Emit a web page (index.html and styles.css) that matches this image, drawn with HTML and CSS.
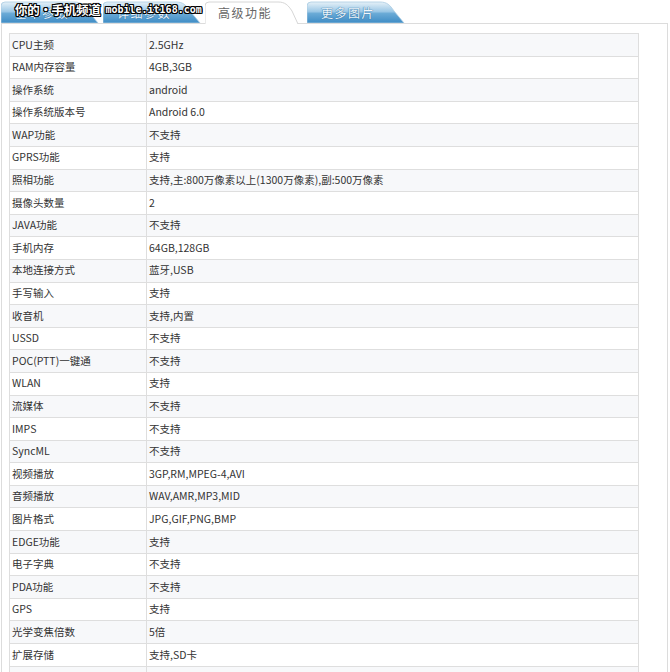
FILE: index.html
```html
<!DOCTYPE html>
<html lang="zh-CN">
<head>
<meta charset="utf-8">
<title>高级功能</title>
<link rel="stylesheet" href="styles.css">
</head>
<body>
<div class="page">
  <div class="tabs">
    <div class="tab tab-blue">
      <svg class="tab-bg" viewBox="0 0 98 22" preserveAspectRatio="none"><defs><linearGradient id="gb" x1="0" y1="0" x2="0" y2="1"><stop offset="0" stop-color="#e6f1f8"/><stop offset="0.45" stop-color="#9cc8e6"/><stop offset="0.55" stop-color="#6aaad6"/><stop offset="1" stop-color="#3e8cc5"/></linearGradient></defs><path d="M0,22 V5 Q0,1 4,1 H73 C80,1 83,4 87,10 L97,22 Z" fill="url(#gb)" stroke="#a9cbe2" stroke-width="0.8"/></svg>
      <span class="tab-text">基本参数</span>
    </div>
    <div class="tab tab-blue">
      <svg class="tab-bg" viewBox="0 0 98 22" preserveAspectRatio="none"><path d="M0,22 V5 Q0,1 4,1 H73 C80,1 83,4 87,10 L97,22 Z" fill="url(#gb)" stroke="#a9cbe2" stroke-width="0.8"/></svg>
      <span class="tab-text">详细参数</span>
    </div>
    <div class="tab tab-active">
      <svg class="tab-bg" viewBox="0 0 98 23" preserveAspectRatio="none"><path d="M0,23 V5 Q0,1 4,1 H73 C80,1 83,4 87,10 L93,23" fill="#fff" stroke="#d6d6d6" stroke-width="1"/></svg>
      <span class="tab-text">高级功能</span>
    </div>
    <div class="tab tab-blue">
      <svg class="tab-bg" viewBox="0 0 98 22" preserveAspectRatio="none"><path d="M0,22 V5 Q0,1 4,1 H73 C80,1 83,4 87,10 L97,22 Z" fill="url(#gb)" stroke="#a9cbe2" stroke-width="0.8"/></svg>
      <span class="tab-text">更多图片</span>
    </div>
    <div class="watermark"><span class="wm-cn">你的•手机频道</span><span class="wm-en">mobile.it168.com</span></div>
  </div>
  <div class="panel">
    <table class="spec">
      <tbody>
        <tr><td class="k">CPU主频</td><td class="v">2.5GHz</td></tr>
        <tr><td class="k">RAM内存容量</td><td class="v">4GB,3GB</td></tr>
        <tr><td class="k">操作系统</td><td class="v">android</td></tr>
        <tr><td class="k">操作系统版本号</td><td class="v">Android 6.0</td></tr>
        <tr><td class="k">WAP功能</td><td class="v">不支持</td></tr>
        <tr><td class="k">GPRS功能</td><td class="v">支持</td></tr>
        <tr><td class="k">照相功能</td><td class="v">支持,主:800万像素以上(1300万像素),副:500万像素</td></tr>
        <tr><td class="k">摄像头数量</td><td class="v">2</td></tr>
        <tr><td class="k">JAVA功能</td><td class="v">不支持</td></tr>
        <tr><td class="k">手机内存</td><td class="v">64GB,128GB</td></tr>
        <tr><td class="k">本地连接方式</td><td class="v">蓝牙,USB</td></tr>
        <tr><td class="k">手写输入</td><td class="v">支持</td></tr>
        <tr><td class="k">收音机</td><td class="v">支持,内置</td></tr>
        <tr><td class="k">USSD</td><td class="v">不支持</td></tr>
        <tr><td class="k">POC(PTT)一键通</td><td class="v">不支持</td></tr>
        <tr><td class="k">WLAN</td><td class="v">支持</td></tr>
        <tr><td class="k">流媒体</td><td class="v">不支持</td></tr>
        <tr><td class="k">IMPS</td><td class="v">不支持</td></tr>
        <tr><td class="k">SyncML</td><td class="v">不支持</td></tr>
        <tr><td class="k">视频播放</td><td class="v">3GP,RM,MPEG-4,AVI</td></tr>
        <tr><td class="k">音频播放</td><td class="v">WAV,AMR,MP3,MID</td></tr>
        <tr><td class="k">图片格式</td><td class="v">JPG,GIF,PNG,BMP</td></tr>
        <tr><td class="k">EDGE功能</td><td class="v">支持</td></tr>
        <tr><td class="k">电子字典</td><td class="v">不支持</td></tr>
        <tr><td class="k">PDA功能</td><td class="v">不支持</td></tr>
        <tr><td class="k">GPS</td><td class="v">支持</td></tr>
        <tr><td class="k">光学变焦倍数</td><td class="v">5倍</td></tr>
        <tr><td class="k">扩展存储</td><td class="v">支持,SD卡</td></tr>
        <tr><td class="k">&nbsp;</td><td class="v">&nbsp;</td></tr>
      </tbody>
    </table>
  </div>
</div>
</body>
</html>
```
FILE: styles.css
```css
html, body {
  margin: 0;
  padding: 0;
  background: #fff;
}
body {
  font-family: "Noto Sans CJK SC", "Noto Sans", sans-serif;
  color: #333;
  overflow: hidden;
}
.page {
  width: 670px;
}
.tabs {
  position: relative;
  display: flex;
  align-items: flex-end;
  gap: 4px;
  height: 23px;
  padding-left: 1px;
}
.tab {
  position: relative;
  width: 98px;
  height: 22px;
  display: flex;
  align-items: center;
  padding-left: 14px;
  box-sizing: border-box;
}
.tab-active {
  height: 23px;
  margin-bottom: -1px;
  z-index: 2;
  padding-left: 13px;
}
.tab-bg {
  position: absolute;
  left: 0;
  top: 0;
  width: 100%;
  height: 100%;
}
.tab-text {
  position: relative;
  font-size: 12px;
  letter-spacing: 1.5px;
  line-height: 1;
  padding-top: 1px;
}
.tab-blue .tab-text {
  color: #eef6fc;
  text-shadow: 0 0 1px #2f6f9f, 0 0 1px #2f6f9f;
}
.tab-muted .tab-text {
  color: #cfe4f3;
  text-shadow: none;
}
.tab-active .tab-text {
  color: #666;
  padding-top: 0;
}
.watermark {
  position: absolute;
  left: 15px;
  top: 4px;
  display: flex;
  align-items: center;
  gap: 5px;
  white-space: nowrap;
  color: #fff;
  font-weight: bold;
  line-height: 1;
  z-index: 3;
  text-shadow: 1px 0 0 #000, -1px 0 0 #000, 0 1px 0 #000, 0 -1px 0 #000,
    1px 1px 0 #000, -1px -1px 0 #000, 1px -1px 0 #000, -1px 1px 0 #000;
}
.wm-cn {
  font-family: "Noto Sans CJK SC", sans-serif;
  font-size: 12.5px;
  letter-spacing: -0.3px;
}
.wm-en {
  font-family: "DejaVu Sans Mono", "Liberation Mono", monospace;
  font-size: 10px;
  letter-spacing: 0;
}
.panel {
  margin-left: 1px;
  width: 667px;
  box-sizing: border-box;
  border-top: 1px solid #dcdcdc;
  border-left: 1px solid #dcdcdc;
  border-right: 1px solid #dcdcdc;
  padding: 9px 0 0 7px;
  height: 649px;
  overflow: hidden;
}
.spec {
  width: 630px;
  border-collapse: collapse;
  border: 1px solid #d2d2d2;
  font-size: 10.5px;
  table-layout: fixed;
}
.spec td {
  height: 22.6px;
  padding: 0 2px;
  border: 1px solid #dedede;
  line-height: 1.2;
  white-space: nowrap;
  box-sizing: border-box;
}
.spec .k {
  width: 137px;
}
.spec tr:nth-child(odd) td {
  background: #f7f8fa;
}
```
